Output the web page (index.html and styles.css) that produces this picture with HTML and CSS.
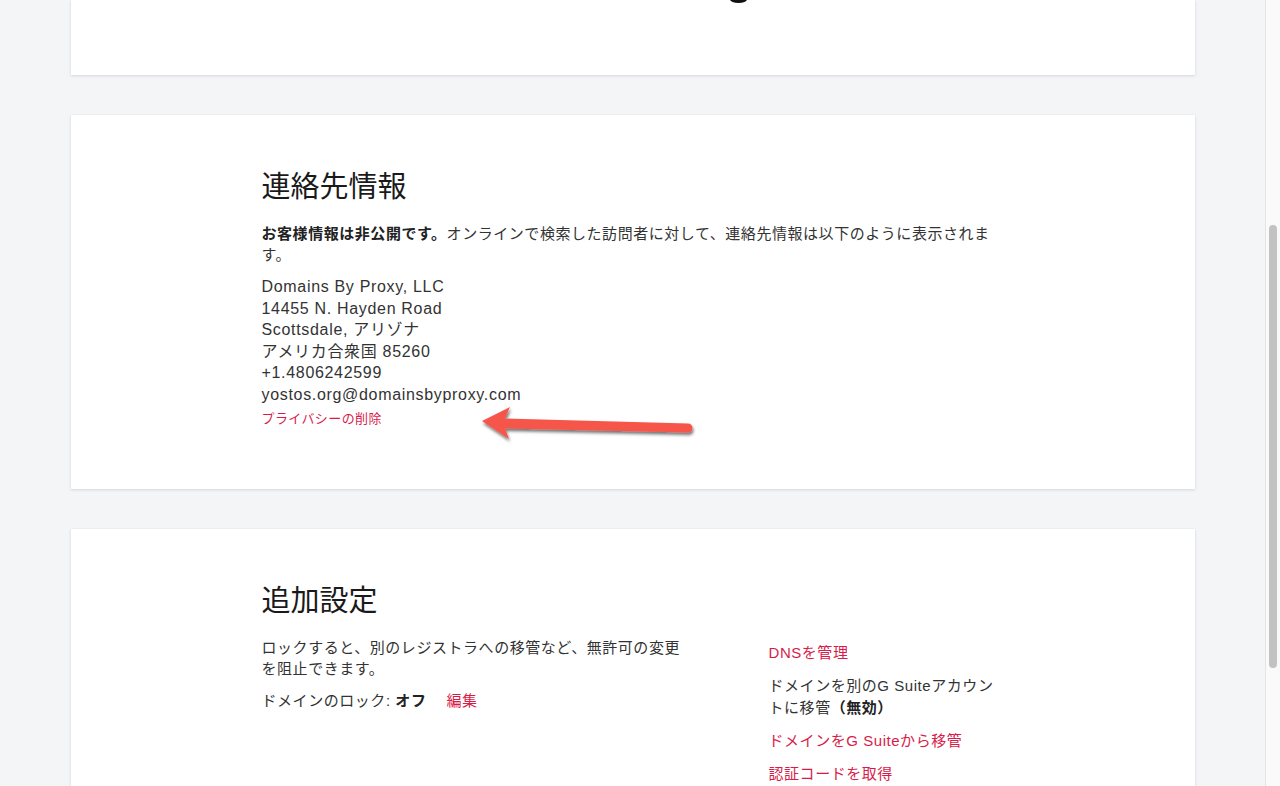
FILE: index.html
```html
<!DOCTYPE html>
<html lang="ja">
<head>
<meta charset="utf-8">
<title>ドメイン設定</title>
<link rel="stylesheet" href="styles.css">
</head>
<body>
<div class="page">
  <section class="card card-top">
    <div class="glyph-tail"></div>
  </section>

  <section class="card card-contact">
    <h2 class="card-title">連絡先情報</h2>
    <p class="lead"><strong>お客様情報は非公開です。</strong>オンラインで検索した訪問者に対して、連絡先情報は以下のように表示されます。</p>
    <div class="address">
      <div>Domains By Proxy, LLC</div>
      <div>14455 N. Hayden Road</div>
      <div>Scottsdale, アリゾナ</div>
      <div>アメリカ合衆国 85260</div>
      <div>+1.4806242599</div>
      <div>yostos.org@domainsbyproxy.com</div>
    </div>
    <a class="small-link" href="#">プライバシーの削除</a>
    <svg class="arrow" width="240" height="60" viewBox="0 0 240 60">
      <defs>
        <filter id="sh" x="-10%" y="-30%" width="130%" height="180%">
          <feDropShadow dx="1" dy="2.5" stdDeviation="1.6" flood-color="#000" flood-opacity="0.55"/>
        </filter>
      </defs>
      <path d="M12,26 L40,12 L35,23.5 L218,28.5 A4.5,4.5 0 0 1 218,37.5 L35,33.5 L39,44 Z" fill="#f6564a" filter="url(#sh)"/>
    </svg>
  </section>

  <section class="card card-settings">
    <h2 class="card-title">追加設定</h2>
    <div class="settings-grid">
      <div class="settings-left">
        <p class="lead">ロックすると、別のレジストラへの移管など、無許可の変更を阻止できます。</p>
        <div class="lock-row">
          <span>ドメインのロック: <strong>オフ</strong></span>
          <a class="link" href="#">編集</a>
        </div>
      </div>
      <ul class="settings-right">
        <li><a class="link" href="#">DNSを管理</a></li>
        <li>ドメインを別のG Suiteアカウントに移管<strong>（無効）</strong></li>
        <li><a class="link" href="#">ドメインをG Suiteから移管</a></li>
        <li><a class="link" href="#">認証コードを取得</a></li>
      </ul>
    </div>
  </section>
</div>
<div class="scrollbar"><div class="thumb"></div></div>
</body>
</html>
```

FILE: styles.css
```css
html, body {
  margin: 0;
  padding: 0;
}
body {
  height: 786px;
  overflow: hidden;
  display: flex;
  background: #f4f5f7;
  font-family: "Liberation Sans", "Noto Sans CJK JP", sans-serif;
  color: #333;
}
.page {
  flex: 1;
  display: flex;
  flex-direction: column;
  align-items: center;
  gap: 40px;
}
.card {
  width: 1124px;
  box-sizing: border-box;
  background: #fff;
  box-shadow: 0 1px 3px rgba(0, 0, 0, 0.12), 0 0 1px rgba(0, 0, 0, 0.06);
  padding: 50px 191px 61px;
  position: relative;
}
.card-top {
  height: 75px;
  padding: 0;
  flex: none;
  overflow: hidden;
}
.glyph-tail {
  margin: -4px 0 0 730px;
  margin-left: 659px;
  width: 17px;
  height: 7px;
  background: #111;
  border-radius: 50%;
}
.card-title {
  margin: 0 0 20px;
  font-family: "Noto Sans CJK JP", sans-serif;
  font-weight: 400;
  font-size: 29px;
  line-height: 38px;
  color: #1a1a1a;
}
.lead {
  margin: 0;
  font-size: 15px;
  line-height: 21px;
  letter-spacing: 0.55px;
  color: #333;
}
.lead strong, .lock-row strong, .settings-right strong {
  font-weight: 700;
  color: #222;
}
.address {
  margin-top: 11px;
  font-size: 16px;
  line-height: 21.6px;
  letter-spacing: 0.68px;
  color: #333;
}
.small-link {
  display: block;
  margin-top: 4px;
  font-size: 13px;
  line-height: 18px;
  letter-spacing: 0.4px;
  color: #d81c4a;
  text-decoration: none;
}
.arrow {
  position: absolute;
  left: 399px;
  top: 280px;
}
.settings-grid {
  display: grid;
  grid-template-columns: 430px 235px;
  column-gap: 77px;
}
.settings-left .lead {
  margin-bottom: 11px;
}
.lock-row {
  display: flex;
  gap: 20px;
  font-size: 15px;
  line-height: 22px;
  letter-spacing: 0.55px;
}
.link {
  color: #d81c4a;
  text-decoration: none;
}
.settings-right {
  list-style: none;
  margin: 5px 0 0;
  padding: 0;
  display: flex;
  flex-direction: column;
  gap: 11px;
  font-size: 15px;
  line-height: 22px;
  letter-spacing: 0.55px;
}
.scrollbar {
  width: 14px;
  flex: none;
  border-left: 1px solid #e4e4e4;
  background: #fafafa;
}
.thumb {
  margin: 225px 0 0 3px;
  width: 8px;
  height: 443px;
  border-radius: 4px;
  background: #c2c2c2;
}
```
